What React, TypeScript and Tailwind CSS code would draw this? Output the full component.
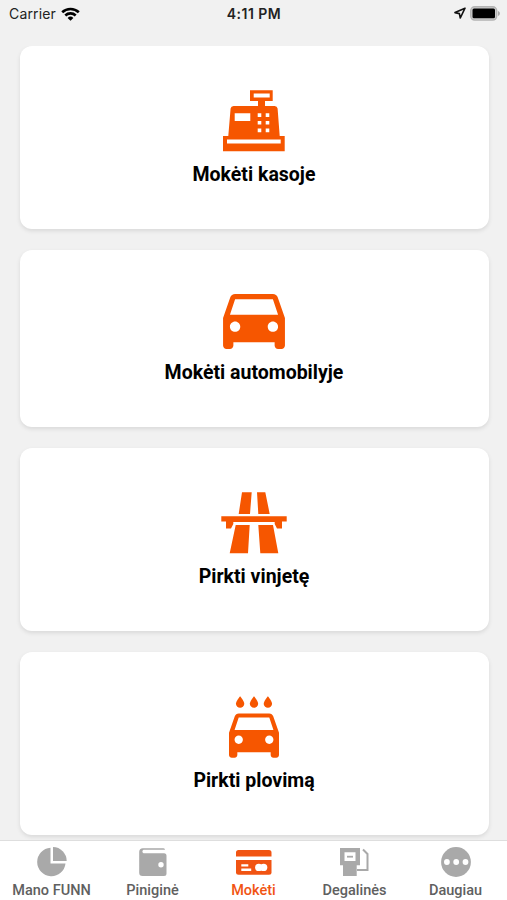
import type { ReactNode } from "react";

const CAR_BODY =
  "M18.92 6.01C18.72 5.42 18.16 5 17.5 5h-11c-.66 0-1.21.42-1.42 1.01L3 12v8c0 .55.45 1 1 1h1c.55 0 1-.45 1-1v-1h12v1c0 .55.45 1 1 1h1c.55 0 1-.45 1-1v-8l-2.08-5.99zM6.5 16c-.83 0-1.5-.67-1.5-1.5S5.67 13 6.5 13s1.5.67 1.5 1.5S7.33 16 6.5 16zm11 0c-.83 0-1.5-.67-1.5-1.5s.67-1.5 1.5-1.5 1.5.67 1.5 1.5-.67 1.5-1.5 1.5zM5 11l1.5-4.5h11L19 11H5z";

function RegisterIcon() {
  return (
    <svg width="62" height="62" viewBox="1 1.8 62 62" fill="currentColor">
      <path
        fillRule="evenodd"
        d="M28 2h22.7v10.7H43v5h9.6q2.6 0 3 2.6l2.1 27.4h5V63H1V47.7h5.3L8.6 20.3q.4-2.6 3-2.6H36v-5h-8zM31.7 5.4v3.9h16V5.4zM12.7 25v7.7h15.6V25zM5 51.3v4h53.7v-4zM35.7 25v3.7h3.6V25zM43.7 25v3.7h3.6V25zM35.7 32.7v3.6h3.6v-3.6zM43.7 32.7v3.6h3.6v-3.6zM35.7 40.3V44h3.6v-3.7zM43.7 40.3V44h3.6v-3.7z"
      />
    </svg>
  );
}

function CarIcon() {
  return (
    <svg width="62" height="55" viewBox="3 5 18 16" fill="currentColor" fillRule="evenodd">
      <path d={CAR_BODY} />
    </svg>
  );
}

function RoadIcon() {
  return (
    <svg width="66" height="62" viewBox="0 0.8 66 62" fill="currentColor">
      <path d="M21 1h9.7L29 22.7H17.7zM36 1h8.3l4.4 21.700H37.300zM14.700 33.700h14L27 62H8.700zM37.300 33.700H52L57.300 62h-18z" />
      <path d="M.3 25h65.400v5.300h-4.700v7H56l-2.300-4.500v-2H12.300v2L10 37.300H5v-7H.3z" />
    </svg>
  );
}

function WashIcon() {
  const drop = "M0 .8s-1.5 1.7-1.5 2.7a1.5 1.5 0 0 0 3 0C1.5 2.5 0 .8 0 .8z";
  return (
    <svg width="50" height="62" viewBox="3 0.8 18 22.2" fill="currentColor">
      {[7, 12, 17].map((x) => (
        <path key={x} d={drop} transform={`translate(${x} 0)`} />
      ))}
      <path d={CAR_BODY} fillRule="evenodd" transform="translate(0 2)" />
    </svg>
  );
}

function PieIcon() {
  return (
    <svg width="30" height="30" viewBox="0 0 30 30" fill="currentColor">
      <path d="M13.5.8V16.5H28.5A14.2 14.2 0 1 1 13.5.8z" />
      <path d="M16 0A14 14 0 0 1 29.700 14H16z" />
    </svg>
  );
}

function WalletIcon() {
  return (
    <svg width="28" height="28" viewBox="0 0 28 28" fill="currentColor">
      <path
        fillRule="evenodd"
        d="M4 .2h20.500a1.500 1.500 0 0 1 1.500 1.500H4.500a2 2 0 0 0 0 3.600H25a2.500 2.500 0 0 1 2.500 2.500V25.500A2.500 2.500 0 0 1 25 28H3.500A3.300 3.300 0 0 1 .2 24.700V4A3.800 3.800 0 0 1 4 .2zM22 14a2.700 2.700 0 1 0 0 5.400A2.700 2.700 0 0 0 22 14z"
      />
    </svg>
  );
}

function CardIcon() {
  return (
    <svg width="36" height="25" viewBox="0 0 36 25" fill="currentColor">
      <path d="M2.500 0h30.500a2.500 2.500 0 0 1 2.500 2.500V6.600H0V2.500A2.500 2.500 0 0 1 2.500 0z" />
      <path d="M0 10h35.500v12.300a2.500 2.500 0 0 1-2.500 2.500H2.500A2.500 2.500 0 0 1 0 22.300z" />
      <g fill="white">
        <path d="M5.300 14.300h7v2.300h-7zM5.300 18.600h9.900v2.300H5.300z" />
        <circle cx="22.800" cy="17.400" r="3.700" />
        <circle cx="27.600" cy="17.400" r="3.700" />
      </g>
    </svg>
  );
}

function PumpIcon() {
  return (
    <svg width="30" height="28" viewBox="0 0 30 28" fill="currentColor">
      <path fillRule="evenodd" d="M0 0h20v17.300h-3.300V28H3V17.300H0zM4.500 4.200v8.800h11V4.200z" />
      <path d="M7 7.800h6v1.800H7z" />
      <path d="M23 1.500 27.500 6V22H17" fill="none" stroke="currentColor" strokeWidth="2" />
    </svg>
  );
}

function MoreIcon() {
  return (
    <svg width="30" height="30" viewBox="0 0 30 30" fill="currentColor">
      <circle cx="15" cy="15" r="14.900" />
      {[5.9, 15.2, 24.5].map((x) => (
        <circle key={x} cx={x} cy="15" r="2.900" fill="white" />
      ))}
    </svg>
  );
}

function StatusBar() {
  return (
    <header className="grid h-[46px] shrink-0 grid-cols-3 items-start pt-[4px] pr-[7px] pl-[9px] font-['Inter',sans-serif] text-[14px] leading-[20px] text-[#222]">
      <div className="flex items-center gap-[5px]">
        <span className="tracking-[0.15px]">Carrier</span>
        <svg width="19" height="14" viewBox="0 0 19 14" fill="none" stroke="black" strokeWidth="2.600">
          <path d="M1.200 5.300a12 12 0 0 1 16.600 0M4.300 8.500a7.500 7.500 0 0 1 10.400 0" />
          <path d="M9.500 13.800 6.600 10.900a4.200 4.200 0 0 1 5.800 0z" fill="black" stroke="none" />
        </svg>
      </div>
      <div className="pr-[1px] text-center font-semibold tracking-[0.5px]">4:11 PM</div>
      <div className="flex h-[18px] items-center justify-end gap-[4px]">
        <svg width="12" height="12" viewBox="0 0 12 12" fill="none" stroke="#111" strokeWidth="1.600" strokeLinejoin="round">
          <path d="M11 1.200 1 5.600l4.400 1 .9 4.400z" />
        </svg>
        <svg width="30" height="15" viewBox="0 0 30 15">
          <rect x=".7" y=".7" width="26" height="13.400" rx="4" fill="#ccc" stroke="#b3b3b3" strokeWidth="1.400" />
          <rect x="2.500" y="2.500" width="22.500" height="9.800" rx="1.500" fill="black" />
          <path d="M28 5c2.500 1 2.500 4 0 5z" fill="#aaa" />
        </svg>
      </div>
    </header>
  );
}

function PayCard({ icon, title }: { icon: ReactNode; title: string }) {
  return (
    <button className="flex w-full shrink-0 flex-col items-center rounded-[12px] bg-white pt-[44px] pb-[41px] shadow-[0_2px_4px_rgba(0,0,0,0.1)]">
      <span className="flex min-h-[56px] items-start text-[#f65600]">{icon}</span>
      <span className="mt-[10px] text-[19.500px] leading-[26px] font-bold text-black">{title}</span>
    </button>
  );
}

function Tab({ icon, label, active = false }: { icon: ReactNode; label: string; active?: boolean }) {
  return (
    <button className="flex flex-1 flex-col items-center">
      <span className={`flex h-[30px] items-center ${active ? "text-[#f15412]" : "text-[#a9a9a9]"}`}>{icon}</span>
      <span className={`mt-[5px] text-[14.500px] leading-[18px] font-medium whitespace-nowrap ${active ? "text-[#f15412]" : "text-[#606060]"}`}>
        {label}
      </span>
    </button>
  );
}

export default function App() {
  return (
    <div className="flex h-[900px] w-[507px] flex-col overflow-hidden bg-[#f1f1f1] font-['Roboto',sans-serif] [&_svg]:block">
      <StatusBar />
      <main className="flex min-h-0 flex-1 flex-col gap-[21px] overflow-hidden pr-[18.500px] pl-[19.500px]">
        <PayCard icon={<RegisterIcon />} title="Mokėti kasoje" />
        <PayCard icon={<CarIcon />} title="Mokėti automobilyje" />
        <PayCard icon={<RoadIcon />} title="Pirkti vinjetę" />
        <PayCard icon={<WashIcon />} title="Pirkti plovimą" />
      </main>
      <nav className="flex h-[60px] shrink-0 border-t border-[#dedede] bg-white px-[1px] pt-[6px]">
        <Tab icon={<PieIcon />} label="Mano FUNN" />
        <Tab icon={<WalletIcon />} label="Piniginė" />
        <Tab icon={<CardIcon />} label="Mokėti" active />
        <Tab icon={<PumpIcon />} label="Degalinės" />
        <Tab icon={<MoreIcon />} label="Daugiau" />
      </nav>
    </div>
  );
}
